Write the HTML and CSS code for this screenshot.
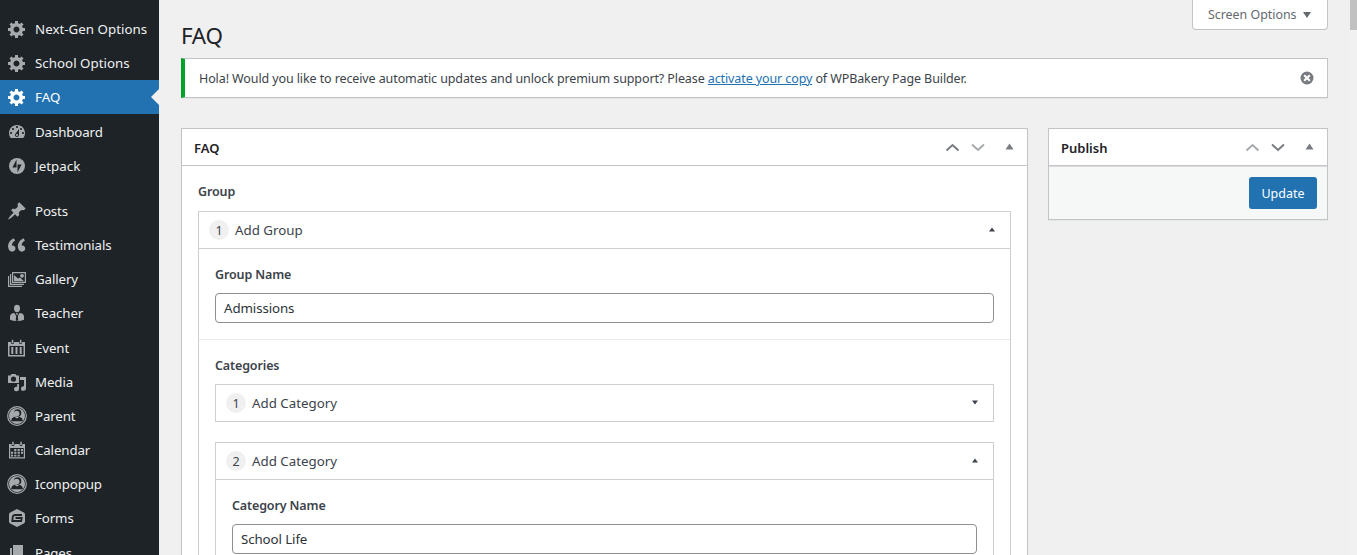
FILE: index.html
```html
<!DOCTYPE html>
<html lang="en">
<head>
<meta charset="utf-8">
<title>FAQ</title>
<link rel="stylesheet" href="styles.css">
</head>
<body>
<svg class="defs" width="0" height="0">
  <symbol id="gear" viewBox="0 0 20 20"><path d="M18 12h-2.18c-.17.7-.44 1.35-.81 1.93l1.54 1.54-2.1 2.1-1.54-1.54c-.58.36-1.23.63-1.91.79V19H8v-2.18c-.68-.16-1.33-.43-1.91-.79l-1.54 1.54-2.12-2.12 1.54-1.54c-.36-.58-.63-1.23-.79-1.91H1V9.03h2.17c.16-.7.44-1.35.8-1.94L2.43 5.55l2.1-2.1 1.54 1.54c.58-.37 1.24-.64 1.93-.81V2h3v2.18c.68.16 1.33.43 1.91.79l1.54-1.54 2.12 2.12-1.54 1.54c.36.59.64 1.24.8 1.94H18V12zm-8.5 1.5c1.66 0 3-1.34 3-3s-1.34-3-3-3-3 1.34-3 3 1.34 3 3 3z"/></symbol>
  <symbol id="user" viewBox="0 0 20 20"><circle cx="10" cy="10" r="9.300" fill="none" stroke="currentColor" stroke-width="1.200"/><circle cx="10" cy="10" r="8"/><circle class="cut" cx="10.600" cy="7" r="3.700"/><circle cx="9.600" cy="7.600" r="2.900"/><path class="cut" d="M4 15.200l1-3 2.400-1.500L10 12.600l2.600-1.900 2.400 1.500 1 3z"/></symbol>
</svg>
<div class="app">
  <nav class="menu">
    <a class="item"><svg class="icon"><use href="#gear"/></svg><span class="wide">Next-Gen Options</span></a>
    <a class="item"><svg class="icon"><use href="#gear"/></svg><span class="wide">School Options</span></a>
    <a class="item current"><svg class="icon"><use href="#gear"/></svg><span class="wide">FAQ</span></a>
    <a class="item"><svg class="icon" viewBox="0 0 20 20"><path d="M3.760 16h12.480c1.100-1.370 1.760-3.110 1.760-5 0-4.420-3.580-8-8-8s-8 3.580-8 8c0 1.890.66 3.630 1.760 5zM10 4c.55 0 1 .45 1 1s-.45 1-1 1-1-.45-1-1 .45-1 1-1zM6 6c.55 0 1 .45 1 1s-.45 1-1 1-1-.45-1-1 .45-1 1-1zm8 0c.55 0 1 .45 1 1s-.45 1-1 1-1-.45-1-1 .45-1 1-1zm-5.370 5.550L12 7v6c0 1.100-.9 2-2 2s-2-.9-2-2c0-.57.24-1.080.63-1.450zM4 10c.55 0 1 .45 1 1s-.45 1-1 1-1-.45-1-1 .45-1 1-1zm12 0c.55 0 1 .45 1 1s-.45 1-1 1-1-.45-1-1 .45-1 1-1zm-5 3c0-.55-.45-1-1-1s-1 .45-1 1 .45 1 1 1 1-.45 1-1z"/></svg><span>Dashboard</span></a>
    <a class="item"><svg class="icon" viewBox="0 0 20 20"><circle cx="10" cy="10" r="8"/><path class="cut" d="M9.500 3.600v7.900H5.400zM10.500 16.400V8.500h4.100z"/></svg><span class="wide">Jetpack</span></a>
    <a class="item gap"><svg class="icon" viewBox="0 0 20 20"><path d="M10.440 3.020l1.820-1.820 6.360 6.350-1.830 1.820c-1.050-.68-2.480-.57-3.410.36l-.75.75c-.92.93-1.040 2.350-.35 3.410l-1.830 1.820-2.410-2.410-2.800 2.790c-.42.42-3.380 2.710-3.800 2.290s1.860-3.390 2.280-3.810l2.790-2.790L4.100 9.360l1.830-1.820c1.050.69 2.480.57 3.400-.36l.75-.75c.93-.92 1.050-2.350.36-3.410z"/></svg><span>Posts</span></a>
    <a class="item"><svg class="icon" viewBox="1.900 1 18 18"><path d="M9.490 13.220c0-.74-.2-1.380-.61-1.900-.62-.78-1.830-.88-2.530-.72-.29-1.650 1.110-3.750 2.920-4.650L7.880 4c-2.730 1.300-5.420 4.280-4.960 8.050C3.210 14.430 4.590 16 6.540 16c.85 0 1.560-.25 2.120-.75s.83-1.180.83-2.030zm8.800 0c0-.74-.2-1.380-.61-1.900-.63-.78-1.830-.88-2.530-.72-.29-1.650 1.110-3.750 2.920-4.650L16.680 4c-2.730 1.300-5.410 4.280-4.950 8.050.29 2.380 1.660 3.950 3.610 3.950.85 0 1.560-.25 2.120-.75s.83-1.180.83-2.030z"/></svg><span>Testimonials</span></a>
    <a class="item"><svg class="icon" viewBox="0 0 20 20"><path fill-rule="evenodd" d="M5 3h14v11H5zM6.200 4.200v8.600h11.600V4.200z"/><path d="M7 12.200V6l4 3.500 2-1 4 3.700z"/><circle cx="15" cy="6.800" r="1.900"/><path d="M3 5h1.200v9.800H17V16H3zM1 7h1.200v9.800H15V18H1z"/></svg><span>Gallery</span></a>
    <a class="item"><svg class="icon" viewBox="0 0 20 20"><ellipse cx="10" cy="5.500" rx="3" ry="3.700"/><path d="M3 16.800v-3.200c0-2.100 1.600-3.500 4.400-3.600L9.200 13l-.5 4.800h2.600l-.5-4.800 1.800-3c2.800.1 4.400 1.500 4.400 3.600v3.200c-4 1.600-10 1.600-14 0z"/><path d="M9 10.300h2l-.5 1.600h-1z"/></svg><span>Teacher</span></a>
    <a class="item"><svg class="icon" viewBox="0 0 20 20"><path fill-rule="evenodd" d="M1 4h17v14.500H1zM2.500 8v9h14V8z"/><path class="slot" d="M4.500 3.500v2h2v-2M12.600 3.500v2h2v-2"/><path d="M4.800 1.800h1.500v3H4.800zM12.900 1.800h1.500v3h-1.500zM4.300 9h2v7h-2zM8.500 9h2v7h-2zM12.700 9h2v7h-2z"/></svg><span>Event</span></a>
    <a class="item"><svg class="icon" viewBox="0 0 20 20"><path fill-rule="evenodd" d="M1 3.500h2.500L4.500 2h4l1 1.500H12V11H1zM6.500 4.500a2.600 2.600 0 1 0 0 5.200 2.600 2.600 0 0 0 0-5.200z"/><path d="M13 5h6v11.500a2.500 2.300 0 1 1-2-2.200V8h-4zM10.200 12H12v5a2.500 2.300 0 1 1-1.800-2.200z"/></svg><span>Media</span></a>
    <a class="item"><svg class="icon"><use href="#user"/></svg><span>Parent</span></a>
    <a class="item"><svg class="icon" viewBox="0 0 20 20"><path fill-rule="evenodd" d="M2 4h16v14.500H2zM3.200 8v9.300h13.600V8z"/><path class="slot" d="M5 3.500v2h2v-2M13 3.500v2h2v-2"/><path d="M5.200 1.800h1.500v3H5.200zM13.300 1.800h1.500v3h-1.500zM7.200 8.900h2.200v2H7.200zM10.600 8.900h2.200v2h-2.200zM14 8.900h2v2h-2zM4 11.800h2.100v2H4zM7.200 11.800h2.200v2H7.200zM10.600 11.800h2.200v2h-2.200zM14 11.800h2v2h-2zM4 14.700h2.100v1.800H4zM7.200 14.700h2.200v1.800H7.200zM10.600 14.700h2.200v1.800h-2.200z"/></svg><span>Calendar</span></a>
    <a class="item"><svg class="icon"><use href="#user"/></svg><span>Iconpopup</span></a>
    <a class="item"><svg class="icon" viewBox="0 0 20 20"><path d="M10 1l6.800 3.600q1.200.7 1.200 1.800v7.200q0 1.100-1.200 1.800L10 19l-6.800-3.600Q2 14.700 2 13.600V6.400q0-1.100 1.200-1.800z"/><path class="line" d="M15 7H8.200Q6 7 5.700 9.200L5.300 13h8.900l.5-3H8.500"/></svg><span>Forms</span></a>
    <a class="item"><svg class="icon" viewBox="0 0 20 20"><path d="M6 2h10v13H6zM3 5h2v11h9v2H3z"/></svg><span>Pages</span></a>
  </nav>
  <main class="content">
    <div class="top">
      <h1>FAQ</h1>
      <div class="screen"><span>Screen Options</span><svg width="10" height="8"><path d="M1 1h8L5 7z"/></svg></div>
    </div>
    <div class="notice">
      <p>Hola! Would you like to receive automatic updates and unlock premium support? Please <a>activate your copy</a> of WPBakery Page Builder.</p>
      <svg width="14" height="14" viewBox="0 0 14 14"><circle cx="7" cy="7" r="6.500"/><path class="cross" d="M4.200 4.200l5.600 5.600M9.800 4.200L4.200 9.800"/></svg>
    </div>
    <div class="columns">
      <section class="box main-box">
        <header class="box-head"><h2>FAQ</h2>
          <svg class="handles" width="70" height="16"><path class="chev" d="M2.500 11.500l6-5.500 6 5.500"/><path class="chev dim" d="M28 5.500l6 5.500 6-5.500"/><path d="M61.500 10.500h8l-4-6z"/></svg>
        </header>
        <div class="fields">
          <label>Group</label>
          <div class="clone">
            <div class="clone-head"><b>1</b><span>Add Group</span><svg width="6" height="5"><path d="M0 4.500h6L3 .5z"/></svg></div>
            <div class="field"><label>Group Name</label><div class="input">Admissions</div></div>
            <div class="field next"><label>Categories</label>
              <div class="clone closed"><div class="clone-head"><b>1</b><span>Add Category</span><svg width="6" height="5"><path d="M0 .5h6L3 4.500z"/></svg></div></div>
              <div class="clone">
                <div class="clone-head"><b>2</b><span>Add Category</span><svg width="6" height="5"><path d="M0 4.500h6L3 .5z"/></svg></div>
                <div class="field"><label>Category Name</label><div class="input">School Life</div></div>
              </div>
            </div>
          </div>
        </div>
      </section>
      <section class="box side-box">
        <header class="box-head"><h2>Publish</h2>
          <svg class="handles" width="70" height="16"><path class="chev dim" d="M2.500 11.500l6-5.500 6 5.500"/><path class="chev" d="M28 5.500l6 5.500 6-5.500"/><path d="M61.500 10.500h8l-4-6z"/></svg>
        </header>
        <div class="actions"><button>Update</button></div>
      </section>
    </div>
  </main>
  <div class="scrollbar"><div class="thumb"></div></div>
</div>
</body>
</html>
```
FILE: styles.css
```css
* { box-sizing: border-box; }
body { margin: 0; height: 555px; overflow: hidden; background: #f0f0f1; color: #3c434a; font: 13px/18px "Noto Sans", "Open Sans", sans-serif; }
h1, h2, p { margin: 0; font-weight: 400; }
svg { flex: none; }
.defs { display: block; height: 0; }
.app { display: flex; height: 555px; overflow: hidden; }

.menu { width: 159px; flex: none; padding-top: 11.970px; background: #1d2327; }
.item { position: relative; display: flex; align-items: center; height: 34.180px; padding-left: 7px; gap: 8px; color: #f0f0f1; font-size: 13.300px; letter-spacing: -.12px; white-space: nowrap; }
.item.gap { margin-top: 11px; }
.wide { letter-spacing: .03px; }
.icon { width: 20px; height: 20px; color: #a7aaad; fill: currentColor; }
.cut { fill: #1d2327; }
.line { fill: none; stroke: #1d2327; stroke-width: 1.800; }
.slot { fill: none; stroke: #1d2327; stroke-width: .8; }
.current { background: #2271b1; color: #fff; }
.current .icon { color: #fff; }
.current::after { content: ""; position: absolute; right: 0; top: 9px; border: 8px solid transparent; border-left: 0; border-right-color: #f0f0f1; }

.content { flex: 1; min-width: 0; padding: 0 22px; }
.top { display: flex; justify-content: space-between; align-items: flex-start; height: 58px; }
h1 { padding-top: 21px; font-size: 22.400px; line-height: 30px; color: #1d2327; letter-spacing: -.3px; }
.screen { display: flex; align-items: center; gap: 5px; width: 136px; height: 30px; padding-left: 15px; background: #fff; border: 1px solid #c3c4c7; border-top: 0; border-radius: 0 0 4px 4px; color: #646970; font-size: 12.400px; white-space: nowrap; }
.screen svg, .notice svg, .handles { fill: #787c82; }
.screen svg { fill: #646970; }
.notice { display: flex; align-items: center; justify-content: space-between; height: 40px; padding: 0 13px 0 14px; background: #fff; border: 1px solid #c3c4c7; border-left: 4px solid #00a32a; box-shadow: 0 1px 1px rgba(0,0,0,.04); }
.notice p { padding-top: 2px; font-size: 12.500px; letter-spacing: -.105px; white-space: nowrap; }
.notice a { color: #2271b1; text-decoration: underline; }
.cross { stroke: #fff; stroke-width: 2; }

.columns { display: flex; gap: 20px; align-items: flex-start; margin-top: 30px; }
.box { background: #fff; border: 1px solid #c3c4c7; box-shadow: 0 1px 1px rgba(0,0,0,.04); }
.main-box { flex: 1; height: 500px; }
.side-box { width: 280px; height: 92px; }
.box-head { display: flex; align-items: center; justify-content: space-between; height: 37px; padding: 0 13px 0 12px; border-bottom: 1px solid #c3c4c7; }
h2 { padding-top: 2px; font-size: 13px; font-weight: 600; color: #1d2327; }
.chev { fill: none; stroke: #787c82; stroke-width: 2; }
.dim { stroke: #a7aaad; }
.actions { display: flex; justify-content: flex-end; height: 53px; padding: 10px; background: #f6f7f7; border-top: 1px solid #dcdcde; }
button { width: 68px; height: 32px; padding: 0; border: 0; border-radius: 3px; background: #2271b1; color: #fff; font: 12.500px "Noto Sans", sans-serif; }

.fields { padding: 17px 16px 16px; }
label { display: block; height: 18px; margin-bottom: 10px; font-size: 12.500px; font-weight: 600; letter-spacing: -.13px; }
.clone { border: 1px solid #ccd0d4; }
.clone.closed { margin-bottom: 20px; }
.clone.closed .clone-head { height: 36px; border-bottom: 0; }
.clone-head { display: flex; align-items: center; height: 37px; padding: 0 15px 0 10px; border-bottom: 1px solid #ccd0d4; font-size: 13.300px; }
.clone-head span { flex: 1; margin-left: 6px; }
.clone-head b { width: 20px; height: 20px; border-radius: 50%; background: #f0f0f1; font-size: 12.500px; line-height: 21px; font-weight: 400; text-align: center; }
.clone-head svg { margin-bottom: 1px; fill: #3c434a; }
.field { padding: 17px 16px 16px; }
.field label { margin-bottom: 9px; }
.field.next { border-top: 1px solid #e8eaec; }
.input { height: 30px; padding: 0 8px; border: 1px solid #8c8f94; border-radius: 4px; color: #2c3338; font-size: 13.300px; line-height: 28px; letter-spacing: -.1px; }

.scrollbar { width: 7px; flex: none; background: #f1f1f1; }
.thumb { height: 30px; background: #c1c1c1; }
```
